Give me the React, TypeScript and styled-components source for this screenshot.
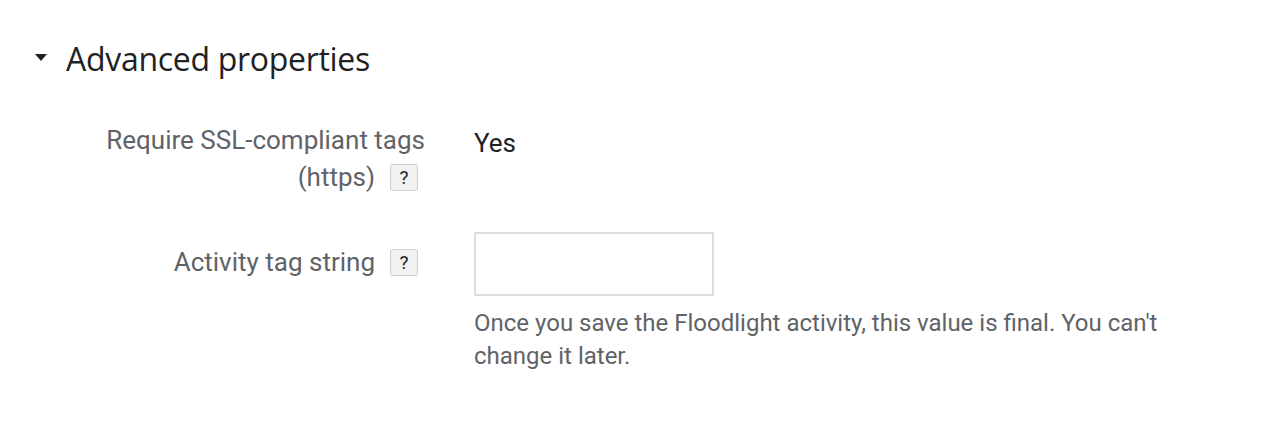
import React from 'react';
import styled, { createGlobalStyle } from 'styled-components';

const GlobalStyle = createGlobalStyle`
  html, body {
    margin: 0;
    padding: 0;
    background: #ffffff;
  }
  body {
    font-family: Roboto, "Liberation Sans", Arial, sans-serif;
    color: #202124;
  }
`;

const Page = styled.div`
  width: 1282px;
  height: 426px;
  padding-top: 37px;
  box-sizing: border-box;
`;

const SectionHeader = styled.div`
  display: flex;
  align-items: center;
  height: 42px;
  padding-left: 35px;
`;

const Caret = styled.span`
  width: 0;
  height: 0;
  border-left: 6px solid transparent;
  border-right: 6px solid transparent;
  border-top: 7px solid #202124;
  margin-right: 19px;
  margin-top: -2px;
`;

const Title = styled.h2`
  margin: 0;
  font-family: "Open Sans", Roboto, sans-serif;
  font-size: 32px;
  font-weight: 400;
  letter-spacing: -0.3px;
  color: #202124;
`;

const Form = styled.div`
  display: grid;
  grid-template-columns: 425px 1fr;
  column-gap: 49px;
  row-gap: 36px;
  margin-top: 43px;
`;

const Label = styled.div<{ $offset?: number }>`
  text-align: right;
  font-size: 26px;
  line-height: 37px;
  color: #5f6368;
  padding-top: ${(p) => p.$offset ?? 0}px;
`;

const HelpBox = styled.span`
  display: inline-flex;
  align-items: center;
  justify-content: center;
  width: 28px;
  height: 27px;
  box-sizing: border-box;
  margin: 0 7px 0 15px;
  vertical-align: middle;
  background: #f1f1f1;
  border: 1px solid #cfcfcf;
  border-radius: 3px;
  font-size: 19px;
  line-height: 1;
  color: #202124;
  position: relative;
  top: -2px;
`;

const Value = styled.div`
  font-size: 26px;
  line-height: 37px;
  padding-top: 3px;
  color: #202124;
`;

const Field = styled.div`
  display: flex;
  flex-direction: column;
`;

const TextInput = styled.input`
  width: 240px;
  height: 64px;
  box-sizing: border-box;
  border: 2px solid #dadce0;
  border-radius: 0;
  outline: none;
  padding: 0 12px;
  font-family: inherit;
  font-size: 22px;
  margin: 0;
`;

const Hint = styled.p`
  margin: 11px 0 0;
  max-width: 700px;
  font-size: 24px;
  line-height: 33px;
  color: #5f6368;
`;

const App: React.FC = () => {
  return (
    <Page>
      <GlobalStyle />
      <SectionHeader>
        <Caret />
        <Title>Advanced properties</Title>
      </SectionHeader>

      <Form>
        <Label>
          Require SSL-compliant tags
          <br />
          (https)
          <HelpBox>?</HelpBox>
        </Label>
        <Value>Yes</Value>

        <Label $offset={12}>
          Activity tag string
          <HelpBox>?</HelpBox>
        </Label>
        <Field>
          <TextInput type="text" />
          <Hint>
            Once you save the Floodlight activity, this value is final. You can't change it later.
          </Hint>
        </Field>
      </Form>
    </Page>
  );
};

export default App;
